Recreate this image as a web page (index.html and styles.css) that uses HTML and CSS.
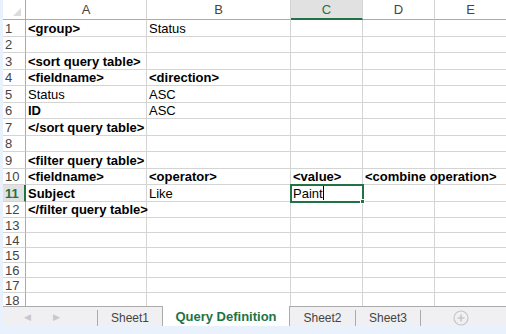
FILE: index.html
```html
<!DOCTYPE html>
<html>
<head>
    <meta charset="UTF-8">
    <title>Query Definition</title>
    <link rel="stylesheet" href="styles.css">
</head>
<body>
<div class="wrap">
    <div class="sheet">
        <div class="grid">
            <div class="corner"><i></i></div><div class="col">A</div><div class="col">B</div><div class="col on">C</div><div class="col">D</div><div class="col">E</div>

            <div class="rh">1</div><div class="c b">&lt;group&gt;</div><div class="c">Status</div><div class="c"></div><div class="c"></div><div class="c"></div>
            <div class="rh">2</div><div class="c"></div><div class="c"></div><div class="c"></div><div class="c"></div><div class="c"></div>
            <div class="rh">3</div><div class="c b">&lt;sort query table&gt;</div><div class="c"></div><div class="c"></div><div class="c"></div><div class="c"></div>
            <div class="rh">4</div><div class="c b">&lt;fieldname&gt;</div><div class="c b">&lt;direction&gt;</div><div class="c"></div><div class="c"></div><div class="c"></div>
            <div class="rh">5</div><div class="c">Status</div><div class="c">ASC</div><div class="c"></div><div class="c"></div><div class="c"></div>
            <div class="rh">6</div><div class="c b">ID</div><div class="c">ASC</div><div class="c"></div><div class="c"></div><div class="c"></div>
            <div class="rh">7</div><div class="c b">&lt;/sort query table&gt;</div><div class="c"></div><div class="c"></div><div class="c"></div><div class="c"></div>
            <div class="rh">8</div><div class="c"></div><div class="c"></div><div class="c"></div><div class="c"></div><div class="c"></div>
            <div class="rh">9</div><div class="c b">&lt;filter query table&gt;</div><div class="c"></div><div class="c"></div><div class="c"></div><div class="c"></div>
            <div class="rh">10</div><div class="c b">&lt;fieldname&gt;</div><div class="c b">&lt;operator&gt;</div><div class="c b">&lt;value&gt;</div><div class="c b">&lt;combine operation&gt;</div><div class="c"></div>
            <div class="rh on">11</div><div class="c b">Subject</div><div class="c">Like</div><div class="c active">Paint<span class="caret"></span><i class="handle"></i></div><div class="c"></div><div class="c"></div>
            <div class="rh">12</div><div class="c b">&lt;/filter query table&gt;</div><div class="c"></div><div class="c"></div><div class="c"></div><div class="c"></div>
            <div class="rh">13</div><div class="c"></div><div class="c"></div><div class="c"></div><div class="c"></div><div class="c"></div>
            <div class="rh">14</div><div class="c"></div><div class="c"></div><div class="c"></div><div class="c"></div><div class="c"></div>
            <div class="rh">15</div><div class="c"></div><div class="c"></div><div class="c"></div><div class="c"></div><div class="c"></div>
            <div class="rh">16</div><div class="c"></div><div class="c"></div><div class="c"></div><div class="c"></div><div class="c"></div>
            <div class="rh">17</div><div class="c"></div><div class="c"></div><div class="c"></div><div class="c"></div><div class="c"></div>
            <div class="rh">18</div><div class="c"></div><div class="c"></div><div class="c"></div><div class="c"></div><div class="c"></div>
        </div>
    </div>
    <div class="tabs">
        <div class="nav"><span>&#9664;</span><span>&#9654;</span></div>
        <a class="tab" href="javascript:;">Sheet1</a>
        <a class="tab on" href="javascript:;">Query Definition</a>
        <a class="tab" href="javascript:;">Sheet2</a>
        <a class="tab" href="javascript:;">Sheet3</a>
        <div class="add">
            <svg width="16" height="16" viewBox="0 0 16 16"><circle cx="8" cy="8" r="7" fill="none" stroke="#c6c6c6" stroke-width="1.2"/><path d="M8 4.5v7M4.5 8h7" stroke="#c6c6c6" stroke-width="1.6"/></svg>
        </div>
    </div>
</div>
</body>
</html>
```

FILE: styles.css
```css
*{margin:0;padding:0;box-sizing:border-box;}
a{text-decoration:none;}
html,body{width:506px;height:334px;overflow:hidden;background:#e9f1fc;}
body{font-family:"Liberation Sans",Arial,sans-serif;font-size:13px;color:#000;}
.wrap{margin-left:3px;height:326px;display:flex;flex-direction:column;}
.sheet{height:306px;overflow:hidden;background:#fff;}
.grid{display:grid;grid-template-columns:23px 121px 144px 72px 72px 72px;grid-template-rows:20px 17px 16px 17px 16px 17px 16px 17px 16px 17px 16px 17px 16px;grid-auto-rows:15px;}
.corner{position:relative;background:#fff;border-right:1px solid #ababab;border-bottom:1px solid #ababab;}
.corner i{position:absolute;right:4px;bottom:3px;width:0;height:0;border-left:8px solid transparent;border-bottom:8px solid #dcdcdc;}
.col{background:#fff;border-right:1px solid #d4d4d4;border-bottom:1px solid #ababab;text-align:center;line-height:19px;font-size:13px;color:#444;}
.col.on{background:#e1e1e1;color:#217346;border-bottom:2px solid #217346;}
.rh{display:flex;align-items:center;background:#fff;border-right:1px solid #ababab;border-bottom:1px solid #d4d4d4;padding-left:2px;font-size:13px;color:#444;}
.rh.on{background:#e1e1e1;color:#217346;font-weight:bold;border-right:2px solid #217346;}
.c{position:relative;display:flex;align-items:center;border-right:1px solid #d4d4d4;border-bottom:1px solid #d4d4d4;padding-left:2px;white-space:nowrap;overflow:visible;}
.c.b{font-weight:bold;}
.c.active{outline:2px solid #217346;outline-offset:-1px;z-index:2;}
.caret{display:inline-block;width:1px;height:14px;background:#000;}
.handle{position:absolute;right:-3px;bottom:-3px;width:5px;height:5px;background:#217346;border:1px solid #fff;}
.tabs{height:20px;display:flex;align-items:stretch;background:#f0f0f3;border-top:1px solid #ababab;font-size:12px;color:#444;}
.nav{width:94px;display:flex;align-items:center;padding-left:21px;gap:22px;font-size:9px;color:#c8c8c8;}
.tab{display:flex;align-items:center;justify-content:center;width:65px;color:#444;border-left:1px solid #ababab;margin:3px 0 0;padding-bottom:1px;}
.tab.on{width:128px;margin:-1px 0 0;background:#fff;color:#217346;font-size:13px;font-weight:bold;border-right:1px solid #ababab;padding-bottom:0;}
.tab.on + .tab{border-left:0;}
.add{border-left:1px solid #ababab;margin-top:3px;padding-left:32px;display:flex;align-items:center;}
```
